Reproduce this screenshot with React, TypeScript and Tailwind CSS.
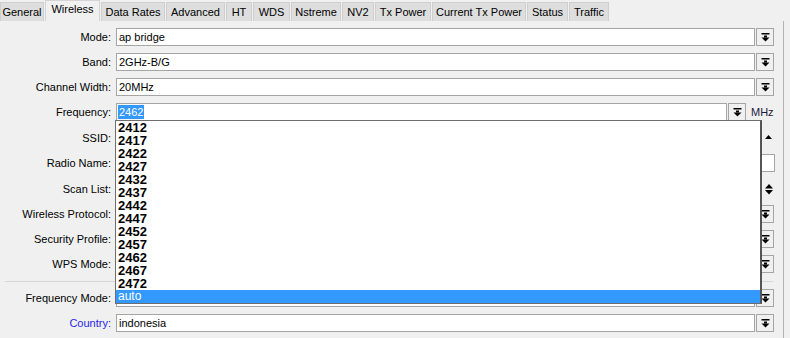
import React from 'react';

const tabs = [
  {name: 'General', w: 'w-[44px]'},
  {name: 'Wireless', w: 'w-[55px]', active: true},
  {name: 'Data Rates', w: 'w-[64px]'},
  {name: 'Advanced', w: 'w-[59px]'},
  {name: 'HT', w: 'w-[26px]'},
  {name: 'WDS', w: 'w-[37px]'},
  {name: 'Nstreme', w: 'w-[50px]'},
  {name: 'NV2', w: 'w-[32px]'},
  {name: 'Tx Power', w: 'w-[56px]'},
  {name: 'Current Tx Power', w: 'w-[94px]'},
  {name: 'Status', w: 'w-[41px]'},
  {name: 'Traffic', w: 'w-[40px]'},
];

const freqs = [
  '2412', '2417', '2422', '2427', '2432', '2437', '2442',
  '2447', '2452', '2457', '2462', '2467', '2472',
];

function DropIcon() {
  return (
    <svg width="9" height="9" viewBox="0 0 9 9">
      <rect x="0.5" y="0" width="8" height="1.5" fill="#000" />
      <rect x="3" y="2.5" width="3" height="2" fill="#000" />
      <polygon points="0.5,4.5 8.5,4.5 4.5,8.5" fill="#000" />
    </svg>
  );
}

function DropButton() {
  return (
    <div className="w-[18px] h-[18px] ml-px border border-[#a5a5a5] bg-[#f0f0f0] flex items-center justify-center">
      <DropIcon />
    </div>
  );
}

type RowProps = {
  label: string;
  value?: string;
  kind?: 'drop' | 'plain' | 'up' | 'updown' | 'freq';
  mt: string;
  blue?: boolean;
};

// values of rows hidden behind the open list are left empty
function Row({label, value = '', kind = 'drop', mt, blue}: RowProps) {
  return (
    <div className={`flex items-center h-[18px] ${mt}`}>
      <div className={`w-[111px] shrink-0 text-right ${blue ? 'text-[#1f1fe6]' : 'text-black'}`}>
        {label}
      </div>
      {kind === 'freq' ? (
        <>
          <div className="ml-[5px] w-[611px] h-[18px] border border-[#a5a5a5] bg-white flex items-center pl-px">
            <span className="bg-[#3399ff] text-white px-px leading-[14px]">{value}</span>
          </div>
          <DropButton />
          <span className="ml-[5px] text-[#1a1a3a]">MHz</span>
        </>
      ) : (
        <>
          <div
            className={`ml-[5px] h-[18px] border border-[#a5a5a5] bg-white flex items-center pl-[2px] ${
              kind === 'plain' ? 'w-[659px]' : 'w-[639px]'
            }`}
          >
            {value}
          </div>
          {kind === 'drop' && <DropButton />}
          {kind === 'up' && (
            <div className="ml-[10px] self-start mt-[6px]">
              <svg width="7" height="5" viewBox="0 0 7 5">
                <polygon points="3.5,0 7,4 0,4" fill="#000" />
              </svg>
            </div>
          )}
          {kind === 'updown' && (
            <div className="ml-[10px]">
              <svg width="8" height="11" viewBox="0 0 8 11">
                <polygon points="4,0 8,4.5 0,4.5" fill="#000" />
                <polygon points="0,6 8,6 4,10.5" fill="#000" />
              </svg>
            </div>
          )}
        </>
      )}
    </div>
  );
}

export default function App() {
  return (
    <div className="w-[790px] h-[338px] bg-[#f0f0f0] overflow-hidden font-['Liberation_Sans',Arial,sans-serif] text-[11px] text-black">
      <div className="flex items-end h-[21px] gap-px">
        {tabs.map((t) =>
          t.active ? (
            <div
              key={t.name}
              className={`${t.w} h-[21px] bg-[#f0f0f0] border-x border-t border-[#d4d4d4] flex justify-center pt-[2px] leading-[13px]`}
            >
              {t.name}
            </div>
          ) : (
            <div
              key={t.name}
              className={`${t.w} h-[19px] bg-[#dedede] border-x border-t border-[#cfcfcf] flex justify-center pt-[3px] leading-[13px]`}
            >
              {t.name}
            </div>
          ),
        )}
      </div>
      <div className="relative w-[784px] h-[317px] border-r border-[#b4b4b4] pt-[7px]">
        <Row label="Mode:" value="ap bridge" mt="mt-0" />
        <Row label="Band:" value="2GHz-B/G" mt="mt-[7px]" />
        <Row label="Channel Width:" value="20MHz" mt="mt-[7px]" />
        <Row label="Frequency:" value="2462" kind="freq" mt="mt-[7px]" />
        <Row label="SSID:" kind="up" mt="mt-[8px]" />
        <Row label="Radio Name:" kind="plain" mt="mt-[7px]" />
        <Row label="Scan List:" kind="updown" mt="mt-[8px]" />
        <Row label="Wireless Protocol:" mt="mt-[7px]" />
        <Row label="Security Profile:" mt="mt-[7px]" />
        <Row label="WPS Mode:" mt="mt-[7px]" />
        <div className="ml-[5px] mt-[8px] w-[768px] h-px bg-[#d6d6d6]" />
        <Row label="Frequency Mode:" mt="mt-[7px]" />
        <Row label="Country:" value="indonesia" blue mt="mt-[7px]" />

        <div className="absolute left-[115px] top-[99px] w-[647px] h-[184px] bg-white border border-[#6e6e6e] border-r-2 border-r-[#555]">
          {freqs.map((f) => (
            <div key={f} className="h-[13px] leading-[13px] pl-[2px] font-bold text-[13px]">
              {f}
            </div>
          ))}
          <div className="h-[13px] leading-[13px] pl-[2px] bg-[#3399ff] text-white text-[12px]">
            auto
          </div>
        </div>
      </div>
    </div>
  );
}
